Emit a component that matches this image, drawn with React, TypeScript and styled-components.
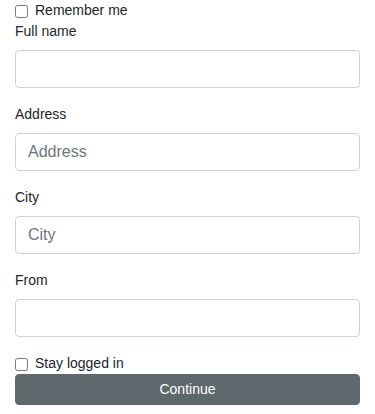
import styled, { createGlobalStyle } from "styled-components";

const GlobalStyle = createGlobalStyle`
  body {
    margin: 0;
    font-family: "Liberation Sans", Arial, sans-serif;
    color: #212529;
    background: #fff;
  }
`;

const fields = [
  { label: "Full name", placeholder: "" },
  { label: "Address", placeholder: "Address" },
  { label: "City", placeholder: "City" },
  { label: "From", placeholder: "" },
];

export default function App() {
  return (
    <>
      <GlobalStyle />
      <Form>
        <CheckRow>
          <Check type="checkbox" />
          Remember me
        </CheckRow>
        {fields.map((f) => (
          <Group key={f.label}>
            <Label>{f.label}</Label>
            <Input type="text" placeholder={f.placeholder} />
          </Group>
        ))}
        <CheckRow>
          <Check type="checkbox" />
          Stay logged in
        </CheckRow>
        <Button type="button">Continue</Button>
      </Form>
    </>
  );
}

const Form = styled.form`
  display: flex;
  flex-direction: column;
  padding: 0 15px;
`;

const CheckRow = styled.label`
  display: flex;
  align-items: center;
  height: 21px;
  font-size: 14px;
  line-height: 21px;
`;

const Check = styled.input`
  width: 13px;
  height: 13px;
  margin: 1px 7px 0 0;
`;

const Group = styled.div`
  display: flex;
  flex-direction: column;
  margin-bottom: 16px;
`;

const Label = styled.label`
  font-size: 14px;
  line-height: 21px;
  margin-bottom: 8px;
`;

const Input = styled.input`
  box-sizing: border-box;
  height: 38px;
  width: 100%;
  padding: 6px 12px;
  font-family: inherit;
  font-size: 16px;
  color: #495057;
  border: 1px solid #ced4da;
  border-radius: 4px;
  outline: none;
  &::placeholder {
    color: #6c757d;
  }
`;

const Button = styled.button`
  box-sizing: border-box;
  width: 100%;
  height: 31px;
  padding: 4px 12px;
  font-family: inherit;
  font-size: 14px;
  line-height: 21px;
  color: #fff;
  background: #5f686c;
  border: 1px solid #5f686c;
  border-radius: 4px;
`;
